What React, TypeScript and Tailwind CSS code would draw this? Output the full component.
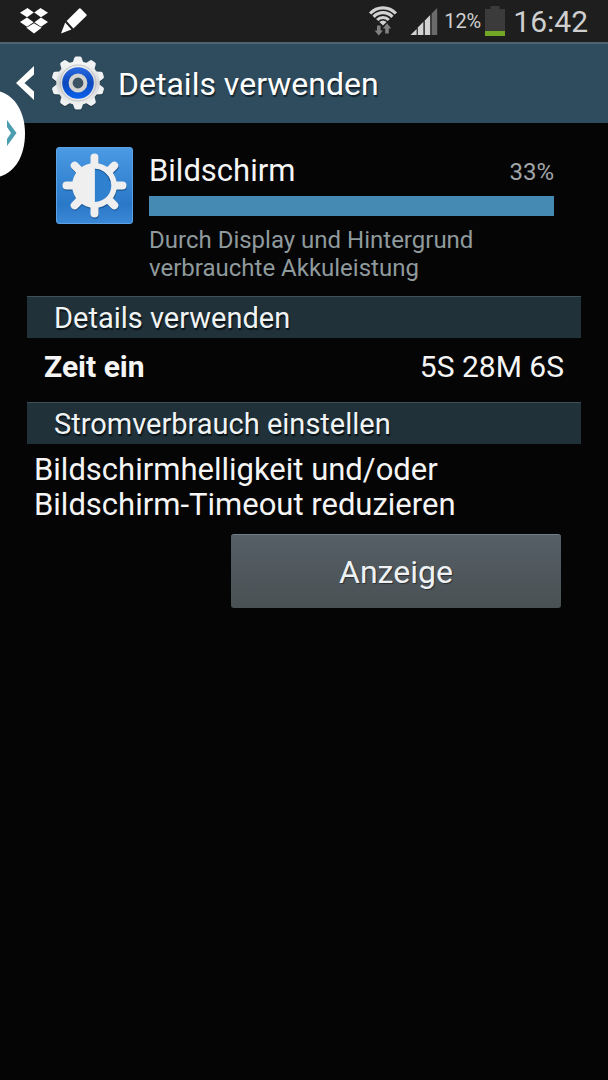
import React from 'react';

const TEETH = [0, 36, 72, 108, 144, 180, 216, 252, 288, 324];
const RAYS = [0, 45, 90, 135, 180, 225, 270, 315];

const DropboxIcon = () => (
  <svg className="h-[26px] w-7" viewBox="0 0 28 26" fill="#fff" aria-hidden="true">
    <path d="M7.5 0L13.8 4.5L7 9.2L0 4.8Z" />
    <path d="M20.5 0L28 4.8L21 9.2L14.2 4.5Z" />
    <path d="M0 14L7 9.6L13.6 14.2L7 18.8Z" />
    <path d="M28 14L21 9.6L14.4 14.2L21 18.8Z" />
    <path d="M6.4 19.8L14 15.2L21.6 19.8L14 25.6Z" />
  </svg>
);

const PenIcon = () => (
  <svg className="h-[26px] w-7" viewBox="0 0 28 26" fill="#fff" aria-hidden="true">
    <path d="M19.2 0.6Q20 0 20.8 0.7L26.5 6.4Q27 7.2 26.3 7.9L13.4 20.6L6.6 13Z" />
    <path d="M5.2 14.6L11.4 21.6L1 25.6Z" />
  </svg>
);

const WifiIcon = () => (
  <svg className="h-[30px] w-[30px]" viewBox="0 0 30 30" fill="none" aria-hidden="true">
    <g stroke="#d2d2d2" strokeWidth="3.2">
      <path d="M2.1 7.5A17.6 17.6 0 0 1 27.9 7.5" />
      <path d="M5.6 10.8A12.8 12.8 0 0 1 24.4 10.8" />
      <path d="M9.2 14A8 8 0 0 1 20.8 14" />
    </g>
    <path d="M11.4 16.1A5 5 0 0 1 18.6 16.1L15 19.5Z" fill="#d2d2d2" />
    <path d="M9 19.5H12.6V24.5H15L10.8 29.6L6.6 24.5H9Z" fill="#808080" />
    <path d="M17.2 27.4H20.8V22.4H23.2L19 17.3L14.8 22.4H17.2Z" fill="#808080" />
  </svg>
);

const SignalIcon = () => (
  <svg className="h-[27px] w-7" viewBox="0 0 28 27" aria-hidden="true">
    <path d="M0.5 27L6.6 21V27Z" fill="#d2d2d2" />
    <path d="M7.8 19.4L13.4 13.8V27H7.8Z" fill="#d2d2d2" />
    <path d="M14.8 12.4L20.2 7V27H14.8Z" fill="#d2d2d2" />
    <path d="M21.6 5.6L27.2 0V27H21.6Z" fill="#6b6b6b" />
  </svg>
);

const BatteryIcon = () => (
  <svg className="h-[30px] w-5" viewBox="0 0 20 30" aria-hidden="true">
    <path d="M5.5 0H14.5V3H20V25H0V3H5.5Z" fill="#3b3b3b" />
    <path d="M0 25H20V30H0Z" fill="#73a625" />
  </svg>
);

const SettingsIcon = () => (
  <svg className="size-14" viewBox="-28 -28 56 56" aria-hidden="true">
    <defs>
      <linearGradient id="gearBody" x1="0" y1="0" x2="0" y2="1">
        <stop offset="0" stopColor="#f7f7f7" />
        <stop offset="0.5" stopColor="#d3d5d8" />
        <stop offset="1" stopColor="#efefef" />
      </linearGradient>
      <linearGradient id="gearBlue" x1="0" y1="0" x2="0" y2="1">
        <stop offset="0" stopColor="#2a6ae0" />
        <stop offset="0.5" stopColor="#0b48bd" />
        <stop offset="1" stopColor="#0a62ec" />
      </linearGradient>
    </defs>
    <g transform="translate(0 1)" fill="#1c3442">
      {TEETH.map((a) => (
        <path key={a} d="M-5.5 -20L-3.6 -25.2Q-3.2 -26.6 -1.8 -26.6H1.8Q3.2 -26.6 3.6 -25.2L5.5 -20Z" transform={`rotate(${a})`} />
      ))}
    </g>
    <g fill="#f0f1f2">
      {TEETH.map((a) => (
        <path key={a} d="M-5.5 -20L-3.6 -25.2Q-3.2 -26.6 -1.8 -26.6H1.8Q3.2 -26.6 3.6 -25.2L5.5 -20Z" transform={`rotate(${a})`} />
      ))}
    </g>
    <circle r="21.8" fill="url(#gearBody)" />
    <circle r="18" fill="none" stroke="#b4b7ba" strokeWidth="0.8" />
    <circle r="15.8" fill="url(#gearBlue)" />
    <circle r="7.4" fill="#3c5364" stroke="#d3d3d0" strokeWidth="4" />
  </svg>
);

const BrightnessIcon = () => (
  <svg className="size-[77px] shrink-0" viewBox="-38.5 -38.5 77 77" aria-hidden="true">
    <defs>
      <linearGradient id="tile" x1="0" y1="0" x2="0" y2="1">
        <stop offset="0" stopColor="#4a9ae4" />
        <stop offset="0.75" stopColor="#2a78c8" />
        <stop offset="1" stopColor="#3a88d6" />
      </linearGradient>
    </defs>
    <rect x="-38" y="-38" width="76" height="76" rx="2.5" fill="url(#tile)" stroke="#5ba3e4" />
    {['#1c5795', '#efefef'].map((color, i) => (
      <g key={color} transform={i === 0 ? 'translate(0.4 1.2)' : undefined} stroke={color} fill={color}>
        {RAYS.map((a) => (
          <path key={a} d="M0 -20V-28" strokeWidth="8" strokeLinecap="round" transform={`rotate(${a})`} />
        ))}
        <circle r="22.4" stroke="none" />
      </g>
    ))}
    <path d="M0.4 -16.4A16.4 16.4 0 0 1 0.4 16.4Z" fill="#2f80cf" />
    <path d="M0.4 -16.4A16.4 16.4 0 0 1 15.6 -4" fill="none" stroke="#1c5795" />
  </svg>
);

interface SectionTitleProps {
  children: React.ReactNode;
}

const SectionTitle: React.FC<SectionTitleProps> = ({ children }) => (
  <h2 className="h-[42px] border-t border-[#3e5058] bg-[#20313a] px-[27px] text-[29px] leading-[42px] text-[#f0f4f5] [text-shadow:1px_2px_1px_#0a1216]">
    {children}
  </h2>
);

const App: React.FC = () => {
  return (
    <div className="relative min-h-screen bg-[#050505] font-['Roboto',sans-serif] text-[#f5f5f5]">
      {/* Status bar */}
      <div className="flex h-[42px] items-center justify-between bg-[#1e1e1e] px-5">
        <div className="flex items-center gap-3">
          <DropboxIcon />
          <PenIcon />
        </div>
        <div className="flex items-center text-[#cfcfcf]">
          <WifiIcon />
          <div className="ml-3">
            <SignalIcon />
          </div>
          <span className="ml-1.5 text-xl">12%</span>
          <div className="ml-1">
            <BatteryIcon />
          </div>
          <span className="ml-2 text-[30px]">16:42</span>
        </div>
      </div>

      {/* Action bar */}
      <header className="flex h-[81px] items-center border-t-2 border-[#4d6470] bg-[#2f4c5e] pb-0.5 pl-4">
        <button type="button" aria-label="Zurück" className="mr-4">
          <svg className="h-[34px] w-[18px]" viewBox="0 0 18 34" aria-hidden="true">
            <path d="M18 0V8.5L8.5 17L18 25.5V34L0 17Z" fill="#fff" />
          </svg>
        </button>
        <SettingsIcon />
        <h1 className="ml-3 pt-0.5 text-[32px] text-white [text-shadow:1px_2px_1px_#14242e]">Details verwenden</h1>
      </header>

      {/* Side panel handle */}
      <button
        type="button"
        aria-label="Seitenleiste öffnen"
        className="absolute top-[90px] left-0 h-[88px] w-[25px] overflow-hidden"
      >
        <svg className="h-[88px] w-[25px]" viewBox="0 0 25 88" aria-hidden="true">
          <path d="M0 1.5C15 6 25 22 25 43.5C25 66 15 82 0 86.5Z" fill="#fff" />
          <path d="M7 30L16.5 43L7 56V49L11 43L7 37Z" fill="#4b9daf" />
        </svg>
      </button>

      <main className="px-[27px]">
        <div className="flex gap-4 pt-6 pr-[27px] pl-[29px]">
          <BrightnessIcon />
          <div className="flex-1">
            <div className="flex h-[49px] items-center justify-between">
              <span className="text-[31px]">Bildschirm</span>
              <span className="text-2xl text-[#a0a6a9]">33%</span>
            </div>
            <div className="h-5 bg-[#458ab3]" />
            <p className="mt-2.5 mb-[14px] text-2xl leading-7 text-[#8f9a9d]">
              Durch Display und Hintergrund verbrauchte Akkuleistung
            </p>
          </div>
        </div>

        <SectionTitle>Details verwenden</SectionTitle>
        <div className="flex h-16 justify-between px-[17px] pt-[11px] text-[30px] leading-9">
          <span className="font-bold">Zeit ein</span>
          <span>5S 28M 6S</span>
        </div>

        <SectionTitle>Stromverbrauch einstellen</SectionTitle>
        <p className="mt-2 px-[7px] text-[31px] leading-[35px]">
          Bildschirmhelligkeit und/oder Bildschirm-Timeout reduzieren
        </p>
        <div className="mt-3 flex justify-end pr-5">
          <button
            type="button"
            className="h-[74px] w-[330px] rounded-[3px] border-t border-[#737d84] bg-linear-to-b from-[#565f67] to-[#495153] text-[32px] text-[#eef2f4] [text-shadow:1px_1px_1px_#2b3134]"
          >
            Anzeige
          </button>
        </div>
      </main>
    </div>
  );
};

export default App;
